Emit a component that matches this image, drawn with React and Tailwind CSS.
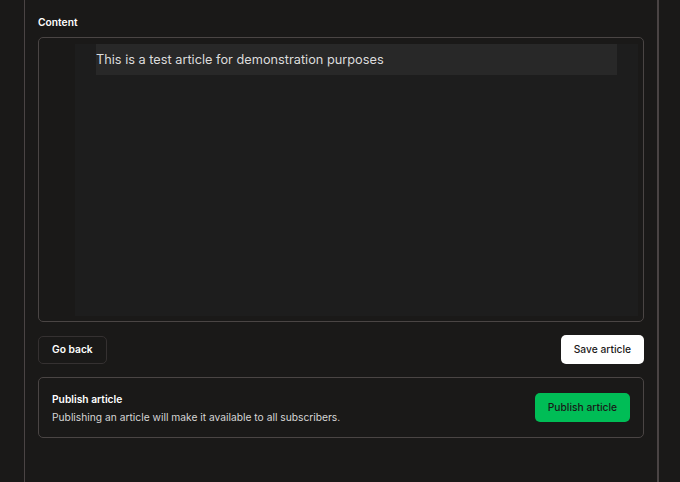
export default function App() {
  return (
    <div
      className="h-[482px] w-[680px] overflow-hidden bg-[#1a1918] text-white"
      style={{ fontFamily: "Inter, 'Liberation Sans', sans-serif" }}
    >
      <div className="ml-[24px] h-full w-[635px] border-l border-r-2 border-[#4a4444] px-[13px] pt-[14px]">
        {/* Content editor */}
        <label className="block text-[10.25px] font-semibold leading-4">Content</label>
        <div className="mt-[7px] h-[285px] rounded-[5px] border border-[#4a4544] pb-[5px] pl-[36px] pr-[5px] pt-[6px]">
          <div className="h-full bg-[#1d1d1d] px-[21px]">
            <div className="flex h-[31px] items-center bg-[#282828] text-[12.75px] text-[#dcdcdc]">
              This is a test article for demonstration purposes
            </div>
          </div>
        </div>

        {/* Actions */}
        <div className="mt-[13px] flex items-center justify-between">
          <button className="h-[28px] rounded-[5px] border border-[#353131] px-[13px] text-[10.25px] font-semibold text-white">
            Go back
          </button>
          <button className="h-[29px] rounded-[5px] bg-white px-[13px] text-[10.25px] font-medium text-[#1a1918]">
            Save article
          </button>
        </div>

        {/* Publish */}
        <div className="mt-[13px] flex h-[61px] items-center justify-between rounded-[5px] border border-[#4a4544] px-[13px]">
          <div>
            <div className="text-[10.25px] font-semibold leading-[18px]">Publish article</div>
            <div className="text-[10.25px] leading-[18px] text-[#d6d6d6]">
              Publishing an article will make it available to all subscribers.
            </div>
          </div>
          <button className="h-[29px] rounded-[5px] bg-[#00bd56] px-[13px] text-[10.25px] font-medium text-[#1a1918]">
            Publish article
          </button>
        </div>
      </div>
    </div>
  );
}
